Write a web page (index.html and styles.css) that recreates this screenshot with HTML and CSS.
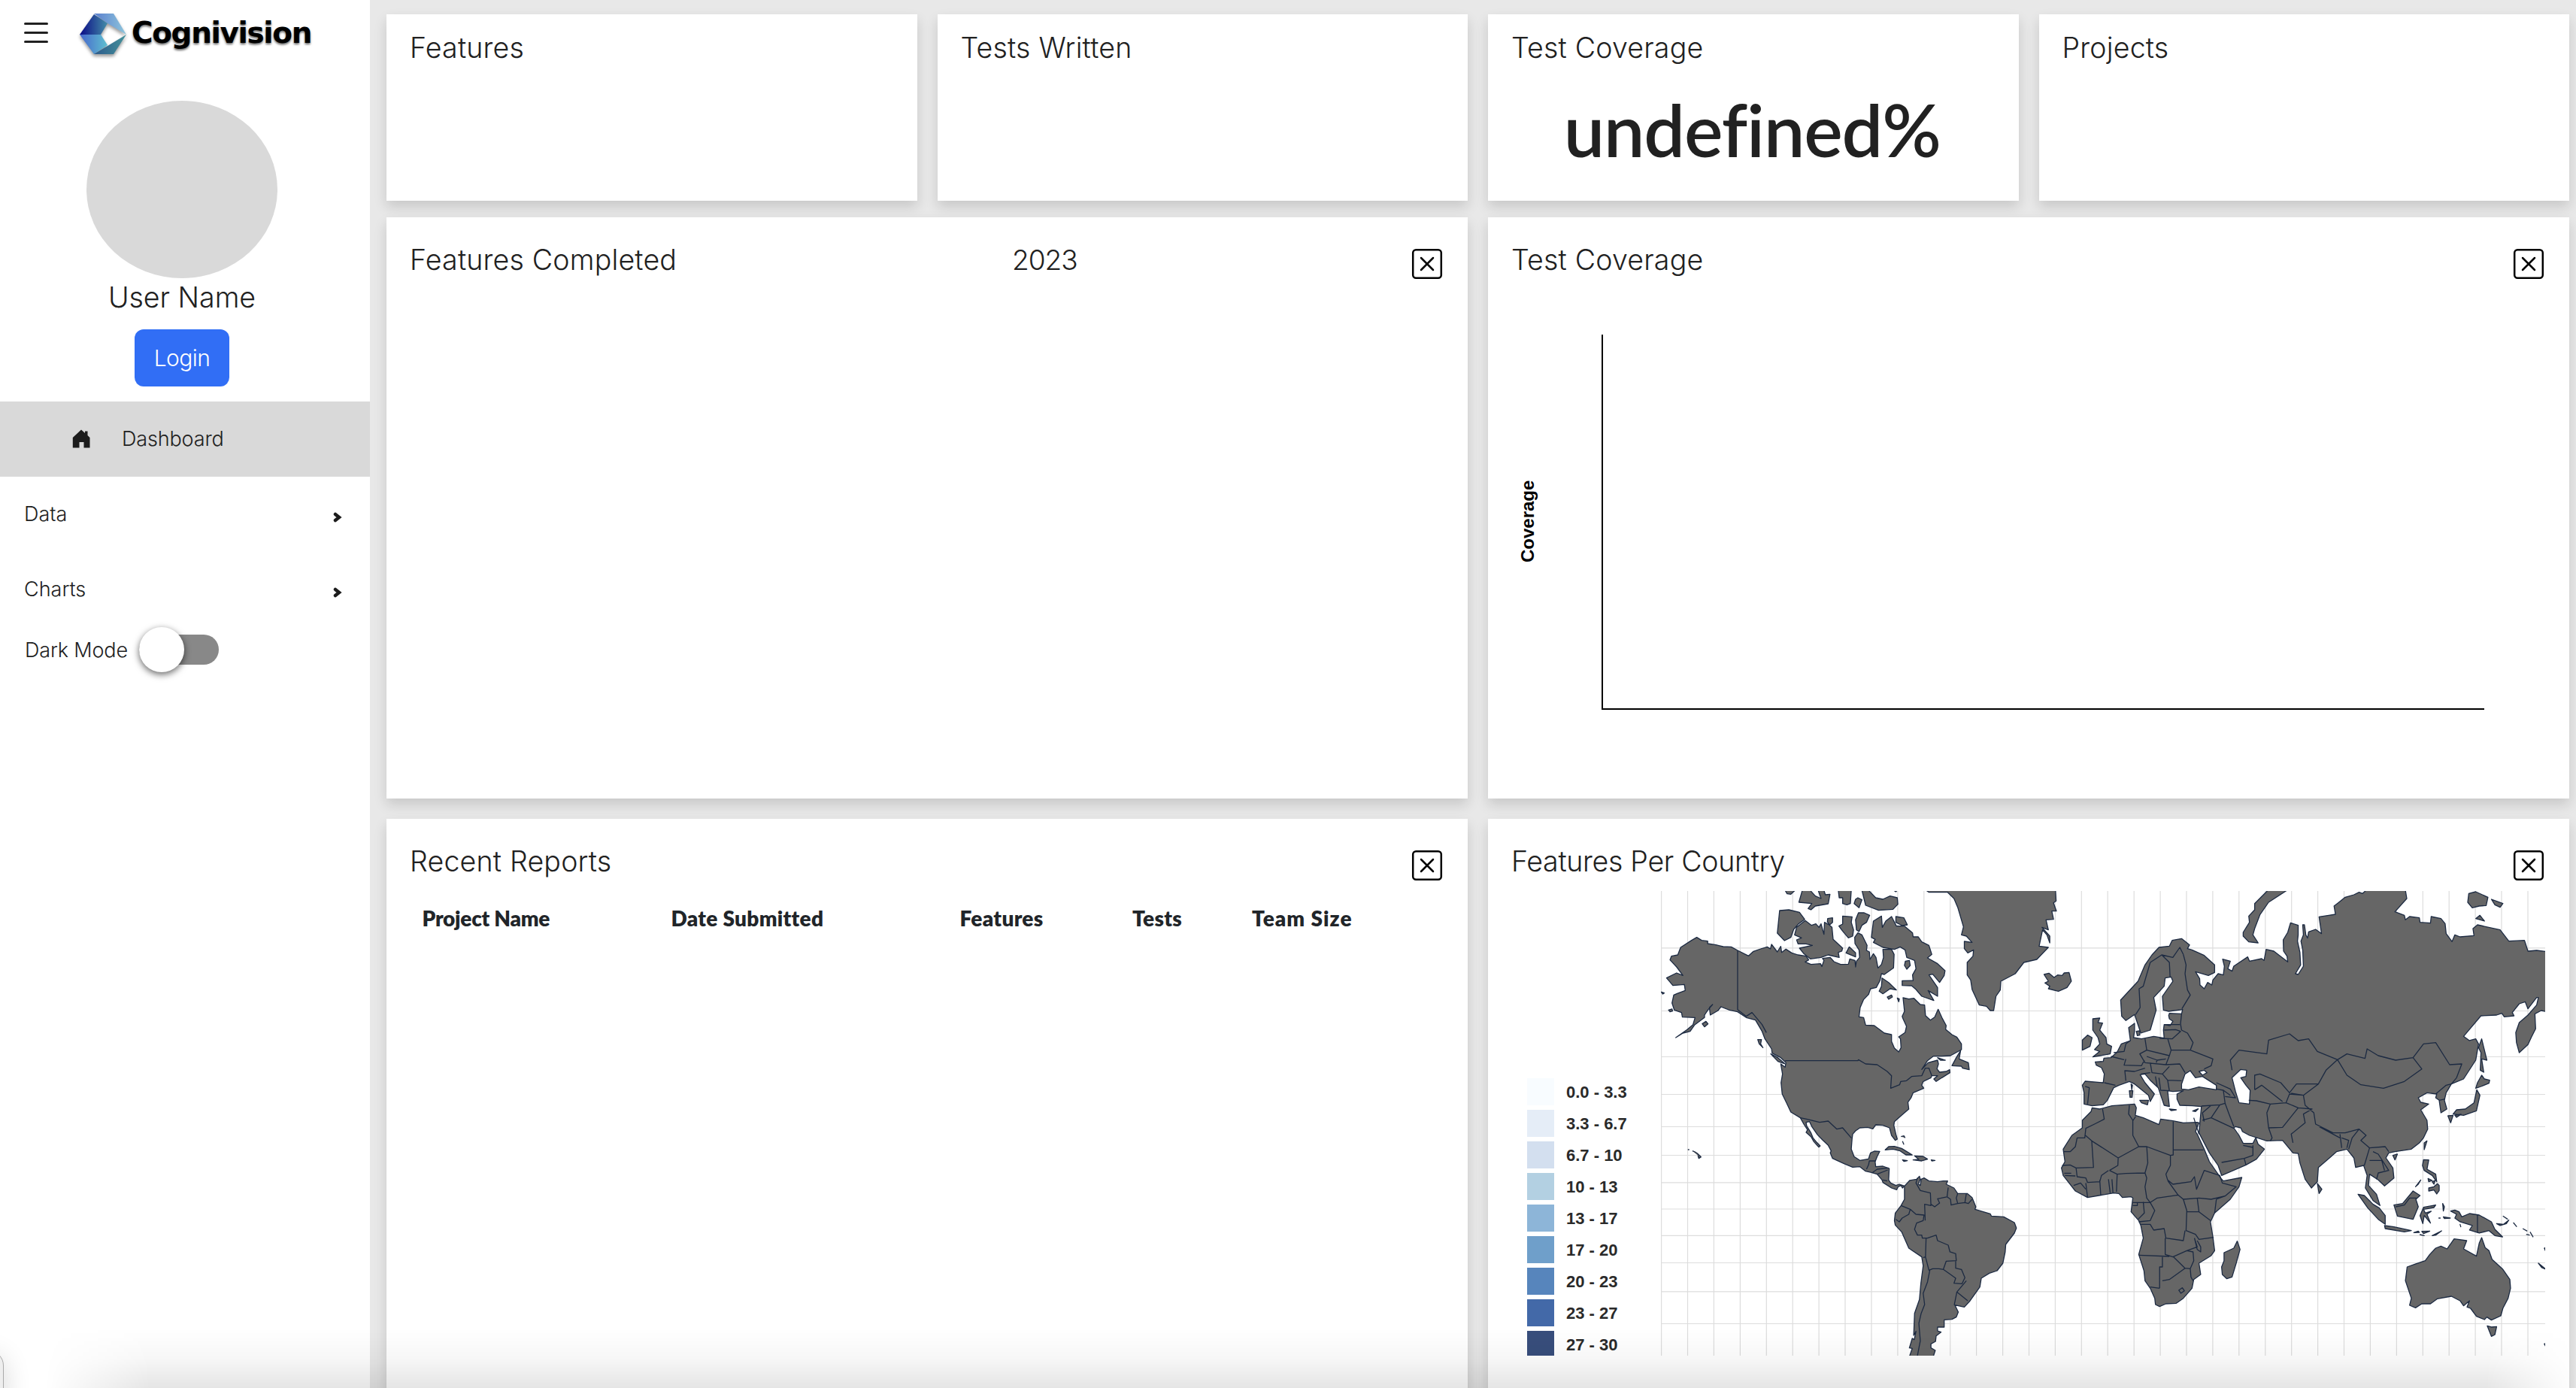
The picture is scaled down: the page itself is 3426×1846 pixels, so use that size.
FILE: index.html
```html
<!DOCTYPE html>
<html lang="en">
<head>
<meta charset="utf-8">
<title>Cognivision</title>
<link rel="stylesheet" href="styles.css">
</head>
<body>
<div class="app">
<aside class="sidebar">
  <header class="brand">
    <svg class="burger" width="34" height="30" viewBox="0 0 34 30"><path d="M2.500 2.500h29M2.500 14.500h29M2.500 26.500h29"/></svg>
    <svg class="mark" width="64" height="56" viewBox="0 0 64 56">
      <defs>
        <linearGradient id="g1"><stop offset="0" stop-color="#0a0a86"/><stop offset="1" stop-color="#448da8"/></linearGradient>
        <linearGradient id="g2"><stop offset="0" stop-color="#5a7fce"/><stop offset="1" stop-color="#8fc6dc"/></linearGradient>
        <linearGradient id="g3"><stop offset="0" stop-color="#4767cc"/><stop offset="1" stop-color="#5fc0d0"/></linearGradient>
        <linearGradient id="g4"><stop offset="0" stop-color="#2c5a8c"/><stop offset="1" stop-color="#45929a"/></linearGradient>
      </defs>
      <path fill="url(#g1)" d="M0 28 19 1 37 13 28 28z"/><path fill="url(#g2)" d="M19 0H45L62 28 37 13z"/>
      <path fill="url(#g3)" d="M0 28H28L37 42 19 54z"/><path fill="url(#g4)" d="M19 54 62 28 45 54z"/>
    </svg>
    <span class="wordmark">Cognivision</span>
  </header>
  <section class="profile">
    <div class="avatar"></div>
    <div class="user">User Name</div>
    <button class="login">Login</button>
  </section>
  <nav>
    <a class="row active"><svg width="24" height="26" viewBox="0 0 24 26"><path d="M12 .5 17 5V2.500h3.500V8L23.500 11V24.500H15.500V17H9.500V24.500H.8V11z"/></svg><span>Dashboard</span></a>
    <a class="row"><span>Data</span><svg class="chev" width="12" height="14" viewBox="0 0 12 14"><path d="M3 3 8 7 3 11"/></svg></a>
    <a class="row"><span>Charts</span><svg class="chev" width="12" height="14" viewBox="0 0 12 14"><path d="M3 3 8 7 3 11"/></svg></a>
  </nav>
  <div class="mode"><span>Dark Mode</span><span class="switch"><i></i></span></div>
</aside>
<main class="board">
  <section class="card stat"><h2>Features</h2></section>
  <section class="card stat"><h2>Tests Written</h2></section>
  <section class="card stat"><h2>Test Coverage</h2><strong>undefined%</strong></section>
  <section class="card stat"><h2>Projects</h2></section>

  <section class="card wide">
    <div class="head"><h2>Features Completed</h2><span class="year">2023</span><svg class="close" width="42" height="42" viewBox="0 0 42 42"><rect x="2.200" y="2.200" width="37.600" height="37.600" rx="4"/><path d="M13 13 29 29M29 13 13 29"/></svg></div>
  </section>
  <section class="card wide">
    <div class="head"><h2>Test Coverage</h2><svg class="close" width="42" height="42" viewBox="0 0 42 42"><rect x="2.200" y="2.200" width="37.600" height="37.600" rx="4"/><path d="M13 13 29 29M29 13 13 29"/></svg></div>
    <svg class="plot" width="1438" height="600" viewBox="1979 400 1438 600"><path d="M2131 445V943H3304" fill="none" stroke="#000" stroke-width="2"/><text transform="translate(2040 748) rotate(-90)">Coverage</text></svg>
  </section>

  <section class="card wide">
    <div class="head"><h2>Recent Reports</h2><svg class="close" width="42" height="42" viewBox="0 0 42 42"><rect x="2.200" y="2.200" width="37.600" height="37.600" rx="4"/><path d="M13 13 29 29M29 13 13 29"/></svg></div>
    <div class="cols"><b class="name">Project Name</b><b>Date Submitted</b><b>Features</b><b>Tests</b><b class="team">Team Size</b></div>
  </section>
  <section class="card wide">
    <div class="head"><h2 class="tight">Features Per Country</h2><svg class="close" width="42" height="42" viewBox="0 0 42 42"><rect x="2.200" y="2.200" width="37.600" height="37.600" rx="4"/><path d="M13 13 29 29M29 13 13 29"/></svg></div>
    <svg class="world" width="1438" height="618" viewBox="1979 1185 1438 618">
      <g class="swatches">
        <path fill="#f8fcff" d="M2031 1434h36v36h-36z"/><path fill="#e5edf7" d="M2031 1476h36v36h-36z"/><path fill="#d3dfef" d="M2031 1518h36v36h-36z"/>
        <path fill="#b3d0e2" d="M2031 1560h36v36h-36z"/><path fill="#8db5d8" d="M2031 1602h36v36h-36z"/><path fill="#6f9fca" d="M2031 1644h36v36h-36z"/>
        <path fill="#5785bc" d="M2031 1686h36v36h-36z"/><path fill="#4369a8" d="M2031 1728h36v36h-36z"/><path fill="#384e7c" d="M2031 1770h36v36h-36z"/>
      </g>
      <g class="legend">
        <text x="2083" y="1460">0.0 - 3.3</text><text x="2083" y="1502">3.3 - 6.7</text><text x="2083" y="1544">6.7 - 10</text>
        <text x="2083" y="1586">10 - 13</text><text x="2083" y="1628">13 - 17</text><text x="2083" y="1670">17 - 20</text>
        <text x="2083" y="1712">20 - 23</text><text x="2083" y="1754">23 - 27</text><text x="2083" y="1796">27 - 30</text>
      </g>
      <svg x="2209" y="1185" width="1176" height="618" viewBox="2209 1185 1176 618">
      <path class="grid" d="M2209.6 1185V1803M2244.500 1185V1803M2279.400 1185V1803M2314.400 1185V1803M2349.300 1185V1803M2384.200 1185V1803M2419.100 1185V1803M2454 1185V1803M2489 1185V1803M2523.900 1185V1803M2558.800 1185V1803M2593.700 1185V1803M2628.600 1185V1803M2663.600 1185V1803M2698.500 1185V1803M2733.400 1185V1803M2768.300 1185V1803M2803.200 1185V1803M2838.200 1185V1803M2873.100 1185V1803M2908 1185V1803M2942.900 1185V1803M2977.800 1185V1803M3012.800 1185V1803M3047.700 1185V1803M3082.600 1185V1803M3117.500 1185V1803M3152.400 1185V1803M3187.400 1185V1803M3222.300 1185V1803M3257.200 1185V1803M3292.100 1185V1803M3327 1185V1803M3362 1185V1803M2209 1260.800H3385M2209 1344.500H3385M2209 1405.500H3385M2209 1455.500H3385M2209 1498.500H3385M2209 1536.500H3385M2209 1572.800H3385M2209 1608H3385M2209 1643.300H3385M2209 1679.500H3385M2209 1717.800H3385M2209 1760.500H3385"/>
      <g class="land" transform="translate(2200 1180) scale(.38265 .33333)">
        <path d="M148 200 165 212 186 215 186 225 215 230 240 237 268 238 290 252 328 274 345 256 370 246 393 238 404 246 408 228 428 258 440 236 443 260 458 247 478 262 500 270 528 275 537 290 525 298 545 308 578 305 583 316 590 292 585 284 612 280 625 297 648 308 675 307 680 286 698 292 700 318 703 295 714 280 712 250 698 225 697 200 708 182 722 190 740 232 738 252 748 258 750 288 762 265 771 280 778 322 790 308 797 280 795 248 825 248 834 268 832 322 800 348 790 345 785 372 772 400 752 405 745 428 728 448 716 480 712 517 728 520 735 550 765 552 800 582 825 588 825 615 835 642 850 657 858 640 856 605 850 597 872 580 877 555 865 525 862 515 870 495 865 441 885 446 903 443 925 468 940 470 943 512 960 530 975 518 987 487 1000 520 1015 552 1013 567 1035 588 1052 598 1068 625 1068 648 1030 672 1000 674 970 674 950 692 930 727 952 700 985 690 988 705 983 725 992 738 1015 735 1027 728 1028 740 1000 760 980 775 972 765 985 752 965 752 962 760 935 775 930 790 937 802 900 820 893 840 882 858 885 885 860 910 835 935 833 950 840 985 845 1005 838 1010 825 990 818 960 795 950 770 948 760 964 742 958 715 960 700 972 690 985 688 1002 685 1045 695 1075 715 1090 745 1084 752 1060 765 1053 784 1054 775 1075 768 1095 770 1115 795 1113 817 1122 815 1168 822 1180 840 1190 852 1185 870 1192 863 1200 858 1190 848 1195 843 1207 825 1200 795 1178 792 1168 775 1145 755 1138 735 1133 715 1115 690 1117 660 1103 620 1082 612 1060 615 1052 605 1030 585 1008 568 988 548 955 540 935 528 938 530 952 545 980 552 1000 565 1018 577 1032 572 1037 555 1015 545 995 528 978 533 968 520 945 508 920 475 897 460 860 445 825 441 780 446 745 440 705 455 718 458 700 440 680 410 662 408 645 385 605 375 575 352 530 320 520 290 497 262 490 232 477 222 492 195 510 192 480 203 468 188 488 175 510 175 520 140 550 125 575 100 582 75 600 115 568 135 548 142 520 98 518 95 500 70 490 62 462 68 430 80 424 108 412 105 388 65 392 43 362 78 342 100 352 78 318 55 290 60 275 82 270 92 240 130 212z"/>
        <path d="M405 665 430 680 455 705 430 695zM360 608 373 608 370 625 378 640 365 625zM167 545 180 535 187 545 175 557zM50 490 62 486 64 494 55 497zM25 418 35 422 30 426zM436 93 468 90 505 100 523 128 500 148 485 168 475 200 453 213 428 183zM488 190 495 160 525 133 547 152 562 146 573 160 580 146 590 188 592 140 608 150 618 160 622 208 655 243 652 255 640 260 643 280 605 270 580 280 543 286 520 265 505 243 550 232 528 226 500 226 495 210 512 202zM603 125 620 122 620 140 610 150 602 138zM655 115 688 118 685 140 693 170 690 195 675 202 655 175 642 155 655 147zM700 130 710 102 730 102 749 112 738 140 722 152 712 177 703 170zM667 262 678 238 700 262 700 278zM762 135 790 115 793 160 805 135 825 117 842 155 870 155 898 182 900 198 918 198 930 218 955 232 965 268 950 282 985 305 1011 333 1008 352 992 380 968 347 955 350 985 400 985 435 952 412 972 452 930 435 910 408 895 393 862 392 862 373 900 372 898 350 910 325 905 292 878 280 872 250 855 238 835 248 795 240 762 220 768 208 755 200zM840 117 868 122 880 150 862 153 840 140zM873 295 887 292 890 312 878 327 870 312zM792 362 815 380 842 410 820 405 795 425 782 415 790 395zM810 438 825 430 828 438 815 447zM845 442 852 446 850 457zM1065 652 1060 685 1092 700 1095 728 1072 722 1068 714 1035 712 1050 680zM985 680 1012 690 995 690zM455 12 490 12 475 28 462 26zM515 12 503 60 548 65 535 85 545 90 560 75 605 66 611 28 595 30 590 12 570 12 580 45 560 35 542 12zM640 12 643 42 655 42 655 65 670 70 682 65 685 12zM695 65 700 48 708 42 722 50 712 82zM722 12 735 72 780 92 830 88 847 68 845 42 820 35 795 48 770 42 745 12zM832 12 840 18 845 12z"/>
        <path d="M945 12 955 20 1020 20 1042 45 1055 80 1075 158 1068 190 1085 195 1105 220 1078 216 1078 245 1090 262 1110 250 1108 275 1088 300 1088 350 1100 370 1105 408 1130 470 1155 475 1168 492 1180 492 1188 435 1203 410 1205 375 1255 345 1285 300 1330 288 1370 240 1338 235 1350 170 1365 190 1375 222 1375 195 1348 160 1370 170 1362 130 1388 128 1382 95 1398 95 1388 62 1397 55 1395 12zM1355 348 1372 343 1390 360 1402 350 1418 352 1425 342 1442 340 1450 375 1435 400 1405 415 1370 405 1375 395 1358 382 1370 375zM803 1048 815 1035 835 1034 860 1042 897 1068 875 1068 855 1052 830 1045zM905 1072 935 1074 950 1085 930 1092 900 1088 920 1086zM863 1088 880 1091 868 1094zM963 1088 976 1090 965 1092zM858 995 868 992 872 1000M863 1013 868 1027M117 1047h5M133 1052 142 1056 150 1062 163 1076 155 1082 152 1070"/>
        <path d="M870 1192 888 1170 912 1165 922 1153 925 1165 918 1185 925 1190 928 1165 938 1160 955 1172 985 1175 1005 1172 1020 1172 1015 1185 1042 1200 1055 1222 1088 1222 1105 1238 1118 1275 1115 1285 1135 1292 1168 1303 1172 1312 1215 1315 1252 1338 1259 1360 1252 1380 1222 1425 1220 1455 1212 1500 1192 1530 1165 1540 1137 1560 1132 1595 1098 1650 1078 1675 1045 1667 1057 1695 1050 1715 1035 1724 1008 1726 1008 1755 985 1755 985 1770 997 1775 980 1790 978 1812 962 1822 962 1838 977 1848 970 1873 887 1873 897 1840 887 1838 897 1800 904 1805 910 1772 902 1788 905 1700 922 1645 927 1580 935 1510 930 1475 885 1440 860 1375 838 1348 835 1330 838 1300 858 1270 870 1245z"/>
        <path class="line" d="M290 252V488L320 515 340 500 375 548 390 580M455 692H708L710 688 735 705 775 708 810 735 825 752 822 802 853 788 857 775 877 772 895 755 930 752 942 722 955 722 965 752M508 920 530 925 575 938 605 933 635 965 655 960 685 1000M915 1160 910 1180 925 1210 960 1220 962 1270 940 1265 942 1330M962 1265 975 1275 992 1260 985 1243 1020 1235M1022 1198 1018 1235 1030 1245 1032 1268 1055 1262 1080 1258 1092 1262 1105 1245M1055 1222 1050 1240 1055 1262M1085 1222 1080 1258M858 1270 890 1285 885 1305 862 1320 852 1335 840 1325M890 1285 910 1305 938 1308 935 1330 912 1340 905 1365 915 1388 930 1388 932 1400 950 1400 980 1388 985 1410 1022 1428 1028 1455 1048 1462 1050 1490 1015 1492 1005 1525 990 1522 968 1522 955 1528 943 1475 945 1402M1005 1525 1030 1545 1048 1560 1042 1580 1070 1582 1080 1558 1068 1525 1048 1520 1048 1490M958 1528 950 1575 935 1620 940 1665 928 1700 920 1740 925 1810 915 1869M1085 1570 1052 1615 1090 1650M1052 1615 1043 1667M770 1092H748L745 1108 738 1125M757 1140 775 1125 815 1120M775 1145 812 1128M795 1168 810 1172M943 1475 935 1478"/>
      </g>
      <g class="land" transform="translate(2700 1180) scale(.46301 .33333)">
        <path d="M155 865 155 820 150 790 158 774 210 780 213 745 205 720 190 710 187 697 210 695 212 682 232 680 250 658 262 625 288 612 283 560 300 543 300 575 297 600 320 605 355 595 385 602 383 570 385 548 402 552 410 535 400 525 398 512 400 503 435 505 438 488 398 495 383 490 380 435 410 375 405 358 388 362 385 395 355 440 362 490 345 570 318 582 300 508 275 532 263 515 260 450 310 375 330 310 350 270 370 240 400 235 408 212 435 205 458 230 452 245 465 250 500 272 530 310 530 340 512 352 475 337 487 365 488 390 500 405 510 380 522 390 525 370 540 345 555 350 558 315 553 287 575 295 568 325 580 335 585 315 625 278 630 295 665 285 672 292 678 248 700 255 740 298 738 275 728 255 727 210 740 180 748 142 770 152 770 190 768 215 775 260 777 310 762 345 770 348 785 315 783 250 778 215 785 190 783 150 788 150 792 190 797 203 800 178 820 168 837 185 830 118 858 112 877 108 873 75 885 62 905 40 930 30 945 20 955 25 965 12 1078 12 1082 45 1048 98 1075 112 1078 130 1090 117 1118 122 1120 140 1150 143 1152 117 1180 125 1192 145 1195 185 1212 217 1220 190 1235 198 1275 193 1272 165 1285 150 1350 170 1375 215 1420 212 1430 255 1455 252 1485 257 1485 497 1468 492 1450 505 1452 565 1440 598 1430 628 1405 660 1397 620 1395 580 1405 540 1430 510 1455 470 1460 440 1455 440 1430 485 1422 457 1405 465 1385 500 1390 513 1362 517 1355 503 1340 510 1295 513 1245 595 1262 612 1280 605 1288 625 1280 690 1245 765 1210 785 1195 820 1190 850 1197 885 1180 900 1175 850 1165 840 1168 825 1140 820 1115 840 1122 858 1145 865 1122 888 1140 930 1142 965 1130 1000 1118 1020 1095 1045 1048 1055 1030 1060 1022 1080 1042 1120 1045 1160 1018 1192 1000 1168 975 1145 972 1190 995 1225 1005 1270 985 1250 963 1200 968 1150 958 1110 935 1118 930 1080 910 1045 880 1055 860 1080 828 1118 825 1175 808 1200 790 1165 775 1100 770 1062 755 1060 725 1010 680 1012 630 990 610 975 605 960 590 955 585 960 600 990 612 1022 640 1022 648 1000 655 1025 673 1045 650 1085 620 1108 550 1150 540 1110 515 1060 485 980 490 905 492 875 465 872 430 870 422 845 422 825 440 812 410 815 395 812 400 875 385 870 368 800 345 770 330 745 316 748 330 780 357 825 345 855 340 830 300 785 285 775 255 790 240 800 222 850 210 868 178 872z"/>
        <path class="sea" d="M435 805 435 785 445 745 460 732 475 760 495 755 535 790 535 808 485 797 455 808zM485 735 500 730 508 740 495 750zM580 760 605 727 622 730 620 755 605 760 620 790 632 810 630 865 600 860 590 815z"/>
        <path d="M315 850 340 850 337 868 320 860zM285 812 295 812 293 838 287 838zM290 785 294 790 292 808zM400 885 420 888 405 891zM467 893 483 884 475 895zM180 525 200 522 195 540 208 542 200 570 218 600 220 625 234 635 230 665 180 677 200 655 185 648 200 625 195 600 180 570zM150 610 165 590 178 600 172 635 150 650zM305 575 315 573 315 590 308 592zM683 12 738 12 685 60 660 110 645 165 640 190 655 222 628 218 612 195 612 180 630 140 628 115 645 90 645 65zM1260 25 1280 18 1315 40 1310 73 1290 75 1270 82 1257 60zM1325 48 1358 65 1350 80 1335 70zM1280 125 1292 112 1305 135zM1297 605 1312 690 1297 685 1303 738 1293 730 1295 660 1288 640zM1297 750 1305 765 1320 770 1318 782 1295 795 1280 802 1285 780zM1283 808 1292 830 1282 892 1245 910 1215 905 1225 888 1250 885 1275 860zM1200 912 1215 910 1208 940zM1220 910 1238 906 1225 918zM1132 1020 1140 1012 1132 1047zM1042 1070 1055 1065 1048 1088zM825 1182 838 1205 830 1222zM942 1225 960 1230 985 1265 1003 1280 1020 1310 1020 1345 1000 1325 970 1280zM1018 1350 1045 1355 1095 1370 1075 1375 1020 1362zM1045 1268 1070 1262 1100 1212 1120 1230 1108 1245 1115 1275 1100 1325 1055 1312zM1130 1277 1165 1268 1160 1278 1130 1285 1135 1300 1152 1293 1140 1305 1150 1340 1132 1310 1128 1342 1120 1310zM1185 1262 1190 1275 1187 1292zM1102 1378 1115 1372 1118 1377zM1125 1373 1148 1372 1130 1382zM1120 1386 1132 1390zM1155 1390 1182 1371 1165 1388zM1173 1320h6M1187 1315 1207 1320 1190 1322zM1235 1345 1237 1355zM1130 1087 1145 1088 1140 1125 1165 1145 1168 1175 1155 1150 1132 1130 1127 1110zM1145 1200 1160 1195 1170 1183 1175 1190 1175 1210 1168 1224 1160 1208 1145 1212zM1143 1162 1155 1170 1145 1175zM1155 1175 1163 1170 1160 1185zM1107 1195 1122 1168 1115 1185zM1208 1292 1220 1288 1232 1295 1240 1315 1262 1302 1290 1308 1325 1335 1335 1365 1357 1395 1335 1390 1318 1370 1290 1380 1262 1368 1270 1350 1235 1335 1220 1320 1225 1305zM1340 1342 1360 1345 1375 1328 1368 1342 1350 1350zM1358 1312 1372 1325M1388 1338 1398 1355M1415 1362 1428 1372M1425 1385 1435 1388M1436 1375 1445 1396"/>
        <path d="M1297 1398 1307 1438 1318 1450 1327 1485 1357 1523 1378 1565 1380 1600 1373 1640 1358 1680 1352 1710 1325 1727 1312 1715 1305 1725 1282 1712 1265 1680 1255 1675 1262 1650 1245 1670 1235 1650 1210 1632 1170 1642 1150 1662 1125 1662 1107 1678 1090 1668 1095 1640 1078 1570 1083 1515 1105 1504 1135 1490 1148 1465 1165 1440 1180 1432 1198 1443 1218 1403 1254 1410 1245 1443 1282 1472 1290 1420zM1313 1750 1325 1755 1340 1753 1335 1785 1325 1792zM1477 1440 1480 1438 1480 1450zM1460 1500 1482 1525 1470 1518zM1477 1822 1481 1820 1481 1832zM595 1412 603 1445 592 1500 580 1555 565 1562 552 1545 550 1515 557 1490 557 1458 585 1440z"/>
        <path d="M178 880 200 885 235 872 300 865 305 880 302 910 325 920 370 947 375 925 410 932 440 940 480 938 485 940 475 975 480 985 500 1045 515 1095 550 1165 555 1172 608 1158 600 1195 575 1245 530 1300 518 1335 525 1395 530 1450 520 1470 485 1500 490 1545 470 1565 465 1600 440 1640 420 1660 390 1662 372 1673 360 1665 358 1640 345 1600 330 1570 327 1530 312 1465 325 1400 318 1350 312 1330 290 1295 295 1240 290 1235 265 1238 255 1222 240 1220 165 1238 130 1212 95 1150 90 1120 100 1095 95 1045 120 990 150 960 150 930 175 895z"/>
        <path class="line" d="M208 885 213 925 185 945 160 962 157 1000H135L130 1035 115 1055H95M157 988 177 1012 182 1118 132 1120M177 1012 253 1080 312 1035 295 990 295 930 283 905 285 870M303 915 296 930M253 1080 252 1110 228 1130M312 1035 335 1035 403 1070 411 1068V935M411 1048H498M335 1035 338 1100 330 1140 335 1160 330 1195 335 1240 345 1258H295M403 1070V1110L390 1145 395 1168 410 1185 462 1175 472 1155 478 1205 500 1130 545 1150 552 1180 592 1195 560 1232 520 1245 485 1240 440 1245 425 1228 395 1170M330 1140 275 1142 250 1145 228 1130M250 1145 248 1215M225 1165 230 1220M235 1165 238 1220M200 1168 203 1230M92 1110 115 1108 132 1120 135 1155 160 1160 165 1178 200 1175 205 1150 225 1130M100 1150 130 1152M98 1141h20M125 1190 145 1180 160 1205M160 1180 165 1238M345 1258 365 1240 425 1228M440 1245 450 1290 448 1370 475 1385 485 1405 527 1397M480 1240 485 1295 518 1330M450 1295H485M530 1300 535 1245 560 1232M318 1345H345L355 1368 385 1362 390 1400 440 1410 445 1370M345 1258 358 1290 345 1330 312 1335M295 1270H308V1258M388 1400V1465L410 1475 450 1450 480 1435 472 1400M312 1468 400 1473M372 1600V1515H380V1475M380 1570 400 1565 445 1520 412 1475M445 1520 460 1522 470 1490 468 1455 450 1450M460 1522 462 1555 468 1570M345 1595 372 1600M427 1608 437 1598 443 1610 433 1620zM472 1400 480 1445 490 1455 490 1435 480 1410M325 1255 328 1300 310 1325M470 920 485 985"/>
        <path class="line" d="M303 508 316 480 313 405 325 395 345 300 378 270 410 280 430 240 440 268M378 270 400 300 402 358M440 268 448 310 445 345 452 410 460 430 436 485M435 505 432 545 435 570 452 582 468 620 460 650M385 570 418 568 432 575 408 605 372 603M385 548 430 548M395 603 405 650 460 650 525 685 520 712 500 725M330 605 335 650 400 672 405 650M288 612 275 625 270 655 240 660M335 650 315 665 330 700 390 708 400 672M275 685 270 710 320 712 328 690M232 675 270 688M213 780 245 790M158 795 170 800 165 865M345 700 350 740 380 745 400 715M390 708 430 705 445 740M380 745 395 770 435 772M318 745 345 740M370 760 375 810 400 812M360 755 365 795M395 770 400 812M275 772 272 732 300 735 330 722M362 700 365 690M335 675 365 690 390 685M492 873 545 868 560 862 555 810 535 805M535 780 575 805 590 840 560 835M555 810 575 830M560 862 570 900 585 955M545 868 520 920 495 930M520 920 585 962M500 935 495 900 520 870M580 730 575 690 600 650 680 665 685 610 745 585 770 612 800 605 825 655 883 688 850 730 828 785M645 808V750L660 745 720 780 745 820 765 785 828 785 785 830 750 822M628 850 650 852 690 865 735 860M645 808 665 790 725 855M735 860 745 825 785 830 790 870 815 900 820 945 870 980 905 980 945 965 965 990 950 1010 975 1040 960 1110M690 865 680 900 685 960 725 958 770 880 735 860M770 880 810 885 785 905 790 940 750 985 755 1020M685 960 695 1000 690 1012M830 955 890 1000M890 985 895 1040M915 1045 925 1000 945 965M895 1000 915 1010 910 1040M975 1040 1020 1035 1030 1055M985 1055 1000 1065 1030 1130 1000 1140 995 1165M975 1090 1010 1090 1018 1130M883 688 910 665 962 683 968 645 1000 672 1050 690 1100 680 1130 625 1165 620 1205 708 1240 705 1225 760 1210 785M883 688 910 750 950 788 1015 802 1075 775 1125 725 1100 680M1210 785 1195 790 1165 825M1175 850 1192 845M550 1098 615 1082 640 1070 640 1030M615 1082 620 1108M612 1030 640 1038M1285 1306V1378M1050 1275 1075 1268 1090 1240 1110 1240"/>
      </g>
      </svg>
    </svg>
  </section>
</main>
<div class="fade"></div><div class="corner"></div>
</div>
</body>
</html>
```
FILE: styles.css
```css
*{box-sizing:border-box}
body{margin:0;font-family:Inter,"Liberation Sans",sans-serif;font-weight:300;color:#212121;background:#e8e8e8}
.app{position:relative;display:flex;width:3426px;height:1846px;overflow:hidden}
.sidebar{width:492px;flex:none;background:#fff;font-size:27px}
.brand{display:flex;height:134px;padding:18px 0 0 31px}
.burger{margin-top:11px}
.burger path{stroke:#212121;stroke-width:3;stroke-linecap:round}
.mark{margin-left:41px;overflow:visible;filter:drop-shadow(0 3px 2px rgba(0,0,0,.4))}
.wordmark{margin:2px 0 0 5px;font:bold 39px/48px "DejaVu Sans",sans-serif;letter-spacing:-1.400px;color:#000;text-shadow:0 2px 3px rgba(0,0,0,.6)}
.profile{display:flex;flex-direction:column;align-items:center;height:400px;padding-right:8px}
.avatar{width:254px;height:236px;flex:none;border-radius:50%;background:#d9d9d9}
.user{height:45px;margin-top:3px;font-size:37.500px;line-height:45px}
.login{width:126px;height:76px;margin-top:20px;padding:0;border:0;border-radius:12px;background:#316ef5;color:#fff;font:300 30px/72px Inter,sans-serif;letter-spacing:-.600px}
.row{display:flex;align-items:center;height:100px;padding:0 37px 0 32px}
.row span{margin-top:-2px}
.active{background:#d9d9d9;padding-left:96px;gap:42px;letter-spacing:-.150px}
.active svg{fill:#1c1c1c}
.chev{margin:8px 0 0 auto;fill:none;stroke:#1c1c1c;stroke-width:4.500;stroke-linecap:round}
.mode{display:flex;align-items:center;height:60px;padding-left:33px;gap:15px;letter-spacing:-.150px}
.switch{width:106px;height:40px;border-radius:20px;background:#888;display:flex;align-items:center}
.switch i{width:60px;height:60px;flex:none;border-radius:50%;background:#fff;box-shadow:0 3px 10px rgba(0,0,0,.6)}
.board{flex:1;display:grid;grid-template-columns:repeat(4,705.500px);grid-template-rows:248px 773px 800px;column-gap:27px;padding:19px 9px 0 22px}
.card{background:#fff;box-shadow:0 8px 16px rgba(0,0,0,.14);padding:22px 34px 0 32px}
.stat{display:flex;flex-direction:column}
.stat strong{align-self:center;margin:28px 0 0 -1px;font:600 97px/116px Lato,sans-serif;letter-spacing:-1.100px;font-variant-ligatures:none}
h2{margin:0 0 0 -1px;font-size:37.500px;line-height:45px;font-weight:300;letter-spacing:.200px;white-space:nowrap}
.tight{letter-spacing:-.300px}
.wide{grid-column:span 2;margin-top:22px;height:773px;padding-top:34px}
.wide:nth-of-type(n+7){margin-top:49px}
.head{display:flex;justify-content:space-between;height:62px;position:relative}
.year{position:absolute;left:800px;font-size:37px;line-height:45px;letter-spacing:-1px}
.close{margin:7px -1px 0 0;fill:none;stroke:#000;stroke-width:2.500;stroke-linecap:round}
.plot{display:block;margin:15px -34px 0 -32px}
.plot text{font:bold 24px "Liberation Sans",sans-serif}
.cols{display:grid;grid-template-columns:331px 384px 229.500px 159px auto;margin-left:15.500px;padding-top:20px;font:800 28px/32px Lato,sans-serif;color:#212529;letter-spacing:.300px;font-variant-ligatures:none}
.cols b{font-weight:800}
.cols .name{letter-spacing:-.250px}
.cols .team{letter-spacing:1px}
.world{display:block;margin:0 -34px 0 -32px}
.legend text{font:bold 22px "Liberation Sans",sans-serif;fill:#2a2a2a}
.grid{fill:none;stroke:#ddd;stroke-width:1.200}
.land path{fill:#666;stroke:#1c2a42;stroke-width:1.300;stroke-linejoin:round;vector-effect:non-scaling-stroke}
.land .line{fill:none}
.land .sea{fill:#fff}
.fade{position:absolute;left:60px;right:0;bottom:0;height:80px;background:linear-gradient(rgba(0,0,0,0),rgba(0,0,0,.03) 50%,rgba(0,0,0,.1));-webkit-mask-image:linear-gradient(90deg,transparent,#000 140px,#000 calc(100% - 120px),transparent);mask-image:linear-gradient(90deg,transparent,#000 140px,#000 calc(100% - 120px),transparent)}
.corner{position:absolute;left:-46px;bottom:-30px;width:51px;height:80px;border:1px solid #aaa;border-radius:20px;background:#eee;box-shadow:0 8px 36px rgba(0,0,0,.16)}
```
